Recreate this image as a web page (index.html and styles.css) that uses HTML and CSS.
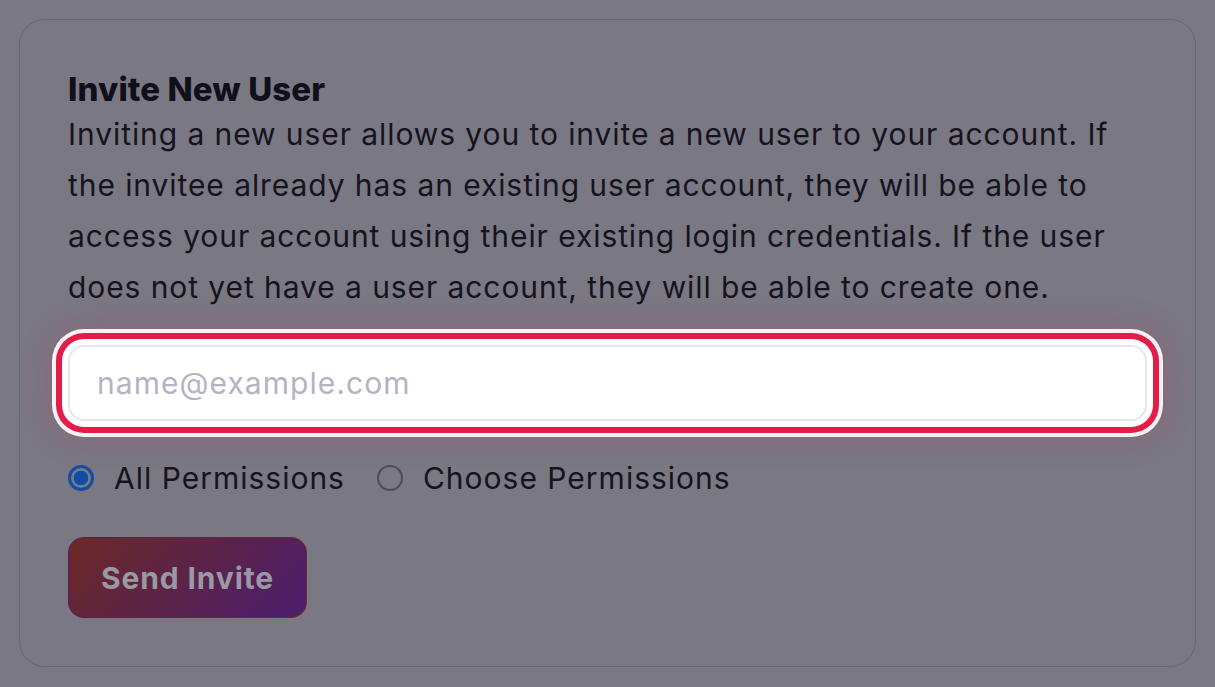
FILE: index.html
```html
<!DOCTYPE html>
<html lang="en">
<head>
<meta charset="utf-8">
<title>Invite New User</title>
<link rel="stylesheet" href="styles.css">
</head>
<body>
  <section class="card">
    <h2 class="title">Invite New User</h2>
    <p class="desc">Inviting a new user allows you to invite a new user to your account. If the invitee already has an existing user account, they will be able to access your account using their existing login credentials. If the user does not yet have a user account, they will be able to create one.</p>
    <input class="email" type="email" placeholder="name@example.com">
    <div class="options">
      <label class="option"><span class="radio checked"></span>All Permissions</label>
      <label class="option"><span class="radio"></span>Choose Permissions</label>
    </div>
    <button class="send" type="button">Send Invite</button>
  </section>
</body>
</html>
```
FILE: styles.css
```css
html, body {
  margin: 0;
  background: #7a7883;
}
body {
  padding: 19px 19px 0;
  font-family: Inter, "Noto Sans", sans-serif;
  color: #15131f;
}
.card {
  border: 1px solid #696773;
  border-radius: 26px;
  padding: 49px 48px 48px;
  display: flex;
  flex-direction: column;
  align-items: flex-start;
}
.title {
  margin: 0;
  font-size: 33px;
  line-height: 40px;
  font-weight: 800;
  letter-spacing: 0.1px;
  color: #110f1a;
}
.desc {
  margin: 0;
  font-size: 30px;
  line-height: 51px;
  letter-spacing: 0.92px;
  color: #15131e;
}
.email {
  box-sizing: border-box;
  align-self: stretch;
  margin: 32px 0 0;
  height: 76px;
  border: 2px solid #e5e5ec;
  border-radius: 16px;
  background: #fff;
  padding: 0 27px;
  font-family: Inter, "Noto Sans", sans-serif;
  font-size: 30px;
  letter-spacing: 1.05px;
  color: #15131f;
  outline: none;
  box-shadow: 0 0 0 6px #fff, 0 0 0 12px #e31d48, 0 0 0 16px #f4f2f4, 0 0 30px 18px rgba(200, 40, 80, 0.22);
}
.email::placeholder {
  color: #b5b3c1;
}
.options {
  margin-top: 36px;
  height: 42px;
  display: flex;
  align-items: center;
  gap: 32px;
}
.option {
  display: flex;
  align-items: center;
  gap: 20px;
  font-size: 30px;
  color: #15131e;
  letter-spacing: 1px;
}
.radio {
  box-sizing: border-box;
  width: 26px;
  height: 26px;
  border-radius: 50%;
  border: 2px solid #4d4b57;
}
.radio.checked {
  border: 3px solid #0f4da6;
  background: radial-gradient(circle, #0f4da6 0 7px, #7a7883 7.5px);
}
.send {
  margin-top: 38px;
  width: 239px;
  height: 81px;
  border: 1px solid transparent;
  border-radius: 16px;
  background: linear-gradient(135deg, #6c2924, #4b1d6e) padding-box, linear-gradient(135deg, #4b1d6e, #7a2a20) border-box;
  font-family: Inter, "Noto Sans", sans-serif;
  font-size: 30px;
  font-weight: 700;
  color: #9a98a3;
  letter-spacing: 0.85px;
  padding: 0;
}
```
